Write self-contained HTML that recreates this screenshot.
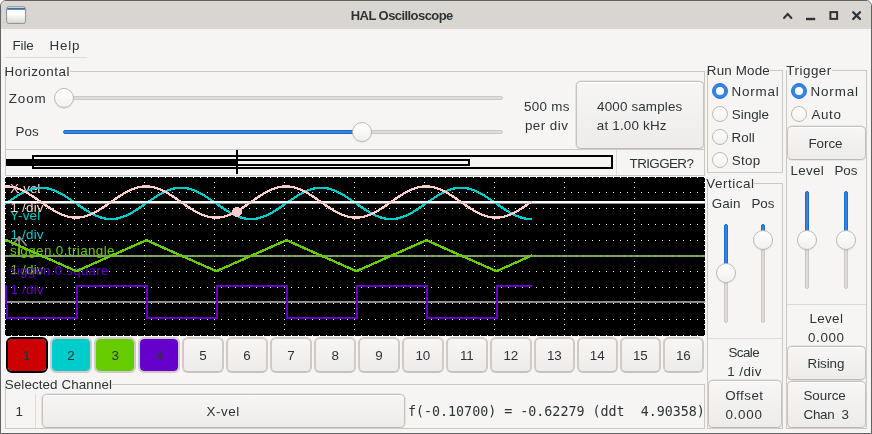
<!DOCTYPE html>
<html><head><meta charset="utf-8"><title>HAL Oscilloscope</title>
<style>
html,body{margin:0;padding:0;}
body{width:872px;height:434px;overflow:hidden;background:#fff;font-family:"Liberation Sans", sans-serif;font-size:13.4px;color:#2e3436;}
#win{position:absolute;left:0;top:0;width:872px;height:434px;box-sizing:border-box;background:#f6f5f4;border:1px solid #626262;border-radius:6px 6px 0 0;overflow:hidden;}
#root{position:absolute;left:-1px;top:-1px;width:872px;height:434px;will-change:transform;}
#title{position:absolute;left:0;top:0;width:872px;height:29px;background:#d9d6d2;}
.t{position:absolute;white-space:pre;line-height:20px;height:20px;}
.fr{position:absolute;box-sizing:border-box;border:1px solid #cdc7c2;}
.hl{position:absolute;height:1px;background:#cdc7c2;}
.sep{background:#dcdbda !important;}
.vl{position:absolute;width:1px;background:#cdc7c2;}
.mask{position:absolute;background:#f6f5f4;}
.btn{position:absolute;box-sizing:border-box;border:1px solid #c9c2bc;border-bottom-color:#bfb8b1;border-radius:5px;background:linear-gradient(#f7f6f5,#eeecea);box-shadow:0 0 0 0.6px #d8d3ce, inset 0 1px #fff;}
.cb{position:absolute;top:337px;height:36px;box-sizing:border-box;border:2px solid #cfcac5;border-radius:6px;background-clip:padding-box !important;}
.cb.btn{border:2px solid #cfcac5;border-bottom-color:#c8c2bc;box-shadow:none;border-radius:6px;}
.scope{position:absolute;}
.htrack{position:absolute;height:4px;box-sizing:border-box;border:1px solid #cdc7c2;background:#deddda;border-radius:2px;}
.hfill{position:absolute;height:4px;box-sizing:border-box;border:1px solid #1b6acb;background:#3584e4;border-radius:2px;}
.vtrack{position:absolute;width:4px;box-sizing:border-box;border:1px solid #cdc7c2;background:#deddda;border-radius:2px;}
.vfill{position:absolute;width:4px;box-sizing:border-box;border:1px solid #1b6acb;background:#3584e4;border-radius:2px;}
.knob{position:absolute;width:20px;height:20px;box-sizing:border-box;border:1px solid #bfb8b1;border-radius:50%;background:linear-gradient(#ffffff,#f1f0ee);box-shadow:0 1px 1px rgba(0,0,0,.08);}
.radio{position:absolute;width:16px;height:16px;box-sizing:border-box;border:1px solid #bfb8b1;border-radius:50%;background:linear-gradient(#ffffff,#f3f2f0);}
.radio.on{border:1px solid #2a76d8;background:#3584e4;}
.radio.on::after{content:"";position:absolute;left:3px;top:3px;width:8px;height:8px;border-radius:50%;background:#fff;}
.blk{position:absolute;background:#000;}
</style></head><body>
<div id="win"><div id="root">
<div id="title"></div>
<!-- window icon -->
<svg style="position:absolute;left:5px;top:5px" width="23" height="21" viewBox="0 0 23 21">
<defs><linearGradient id="ig" x1="0" y1="0" x2="0" y2="1"><stop offset="0" stop-color="#fff"/><stop offset="0.45" stop-color="#fdfdfd"/><stop offset="1" stop-color="#d6d8d4"/></linearGradient></defs>
<rect x="1.6" y="1.7" width="19" height="16.7" rx="2" fill="url(#ig)" stroke="#8f908c" stroke-width="1"/>
<rect x="2.2" y="2.8" width="17.8" height="2" fill="#416cab"/>
</svg>
<!-- window buttons -->
<svg style="position:absolute;left:778px;top:6px" width="90" height="18" viewBox="0 0 90 18" fill="none" stroke="#2e3436" stroke-width="2">
<path d="M6 12L9.7 8L13.4 12" stroke-linecap="round" stroke-linejoin="miter"/>
<path d="M28 13H37.2" stroke-width="2.4"/>
<rect x="52.4" y="6.1" width="6.7" height="6.8"/>
<path d="M75.2 6.2L82 13M82 6.2L75.2 13" stroke-width="2.3" stroke-linecap="round"/>
</svg>
<!-- menubar line -->
<div class="hl" style="left:5px;top:57px;width:82px;background:#dedbd8"></div>

<!-- Horizontal frame -->
<div class="fr" style="left:5px;top:71px;width:700px;height:105px"></div>
<div class="mask" style="left:6px;top:66px;width:64px;height:10px"></div>
<div class="hl" style="left:6px;top:149px;width:698px"></div>
<div class="vl sep" style="left:616px;top:150px;height:25px"></div>
<div class="htrack" style="left:55px;top:96px;width:448px"></div>
<div class="knob" style="left:54px;top:88px"></div>
<div class="htrack" style="left:63px;top:130px;width:440px"></div>
<div class="hfill" style="left:63px;top:130px;width:299px"></div>
<div class="knob" style="left:352px;top:122px"></div>
<div class="btn" style="left:576px;top:81px;width:128px;height:68px"></div>
<!-- thumbnail -->
<div class="blk" style="left:6px;top:159px;width:231px;height:7px"></div>
<div class="blk" style="left:32px;top:155px;width:581px;height:14px;background:none;box-sizing:border-box;border:2px solid #000"></div>
<div class="blk" style="left:236px;top:159px;width:234px;height:7px;background:none;box-sizing:border-box;border:2px solid #000;border-left:none"></div>
<div class="blk" style="left:236px;top:150px;width:2px;height:24px"></div>

<!-- scope -->
<svg class="scope" width="700" height="159" viewBox="0 0 700 159" style="left:5px;top:177px">
<rect width="700" height="159" fill="#000"/>
<g stroke="#fff" stroke-width="1" shape-rendering="crispEdges">
<line x1="-1" y1="0.5" x2="700" y2="0.5" stroke-dasharray="1 6"/>
<line x1="-1" y1="15.5" x2="700" y2="15.5" stroke-dasharray="1 6"/>
<line x1="-1" y1="31.5" x2="700" y2="31.5" stroke-dasharray="1 6"/>
<line x1="-1" y1="47.5" x2="700" y2="47.5" stroke-dasharray="1 6"/>
<line x1="-1" y1="63.5" x2="700" y2="63.5" stroke-dasharray="1 6"/>
<line x1="-1" y1="79.5" x2="700" y2="79.5" stroke-dasharray="1 6"/>
<line x1="-1" y1="94.5" x2="700" y2="94.5" stroke-dasharray="1 6"/>
<line x1="-1" y1="110.5" x2="700" y2="110.5" stroke-dasharray="1 6"/>
<line x1="-1" y1="126.5" x2="700" y2="126.5" stroke-dasharray="1 6"/>
<line x1="-1" y1="142.5" x2="700" y2="142.5" stroke-dasharray="1 6"/>
<line x1="-1" y1="158.5" x2="700" y2="158.5" stroke-dasharray="1 6"/>
<path d="M0 0v1M0 5v1M0 10v1M0 15v1M0 21v1M0 26v1M0 31v1M0 36v1M0 42v1M0 47v1M0 52v1M0 57v1M0 63v1M0 68v1M0 73v1M0 79v1M0 84v1M0 89v1M0 94v1M0 100v1M0 105v1M0 110v1M0 115v1M0 121v1M0 126v1M0 131v1M0 136v1M0 142v1M0 147v1M0 152v1M0 158v1M69 0v1M69 5v1M69 10v1M69 15v1M69 21v1M69 26v1M69 31v1M69 36v1M69 42v1M69 47v1M69 52v1M69 57v1M69 63v1M69 68v1M69 73v1M69 79v1M69 84v1M69 89v1M69 94v1M69 100v1M69 105v1M69 110v1M69 115v1M69 121v1M69 126v1M69 131v1M69 136v1M69 142v1M69 147v1M69 152v1M69 158v1M139 0v1M139 5v1M139 10v1M139 15v1M139 21v1M139 26v1M139 31v1M139 36v1M139 42v1M139 47v1M139 52v1M139 57v1M139 63v1M139 68v1M139 73v1M139 79v1M139 84v1M139 89v1M139 94v1M139 100v1M139 105v1M139 110v1M139 115v1M139 121v1M139 126v1M139 131v1M139 136v1M139 142v1M139 147v1M139 152v1M139 158v1M209 0v1M209 5v1M209 10v1M209 15v1M209 21v1M209 26v1M209 31v1M209 36v1M209 42v1M209 47v1M209 52v1M209 57v1M209 63v1M209 68v1M209 73v1M209 79v1M209 84v1M209 89v1M209 94v1M209 100v1M209 105v1M209 110v1M209 115v1M209 121v1M209 126v1M209 131v1M209 136v1M209 142v1M209 147v1M209 152v1M209 158v1M279 0v1M279 5v1M279 10v1M279 15v1M279 21v1M279 26v1M279 31v1M279 36v1M279 42v1M279 47v1M279 52v1M279 57v1M279 63v1M279 68v1M279 73v1M279 79v1M279 84v1M279 89v1M279 94v1M279 100v1M279 105v1M279 110v1M279 115v1M279 121v1M279 126v1M279 131v1M279 136v1M279 142v1M279 147v1M279 152v1M279 158v1M349 0v1M349 5v1M349 10v1M349 15v1M349 21v1M349 26v1M349 31v1M349 36v1M349 42v1M349 47v1M349 52v1M349 57v1M349 63v1M349 68v1M349 73v1M349 79v1M349 84v1M349 89v1M349 94v1M349 100v1M349 105v1M349 110v1M349 115v1M349 121v1M349 126v1M349 131v1M349 136v1M349 142v1M349 147v1M349 152v1M349 158v1M419 0v1M419 5v1M419 10v1M419 15v1M419 21v1M419 26v1M419 31v1M419 36v1M419 42v1M419 47v1M419 52v1M419 57v1M419 63v1M419 68v1M419 73v1M419 79v1M419 84v1M419 89v1M419 94v1M419 100v1M419 105v1M419 110v1M419 115v1M419 121v1M419 126v1M419 131v1M419 136v1M419 142v1M419 147v1M419 152v1M419 158v1M489 0v1M489 5v1M489 10v1M489 15v1M489 21v1M489 26v1M489 31v1M489 36v1M489 42v1M489 47v1M489 52v1M489 57v1M489 63v1M489 68v1M489 73v1M489 79v1M489 84v1M489 89v1M489 94v1M489 100v1M489 105v1M489 110v1M489 115v1M489 121v1M489 126v1M489 131v1M489 136v1M489 142v1M489 147v1M489 152v1M489 158v1M559 0v1M559 5v1M559 10v1M559 15v1M559 21v1M559 26v1M559 31v1M559 36v1M559 42v1M559 47v1M559 52v1M559 57v1M559 63v1M559 68v1M559 73v1M559 79v1M559 84v1M559 89v1M559 94v1M559 100v1M559 105v1M559 110v1M559 115v1M559 121v1M559 126v1M559 131v1M559 136v1M559 142v1M559 147v1M559 152v1M559 158v1M629 0v1M629 5v1M629 10v1M629 15v1M629 21v1M629 26v1M629 31v1M629 36v1M629 42v1M629 47v1M629 52v1M629 57v1M629 63v1M629 68v1M629 73v1M629 79v1M629 84v1M629 89v1M629 94v1M629 100v1M629 105v1M629 110v1M629 115v1M629 121v1M629 126v1M629 131v1M629 136v1M629 142v1M629 147v1M629 152v1M629 158v1M699 0v1M699 5v1M699 10v1M699 15v1M699 21v1M699 26v1M699 31v1M699 36v1M699 42v1M699 47v1M699 52v1M699 57v1M699 63v1M699 68v1M699 73v1M699 79v1M699 84v1M699 89v1M699 94v1M699 100v1M699 105v1M699 110v1M699 115v1M699 121v1M699 126v1M699 131v1M699 136v1M699 142v1M699 147v1M699 152v1M699 158v1" transform="translate(0.5 0)"/>
</g>
<g fill="none" stroke-width="2.3" stroke-linejoin="round" shape-rendering="crispEdges">
<rect x="0" y="25" width="700" height="2" fill="#8c8c8c" stroke="none"/>
<rect x="0" y="78" width="700" height="2" fill="#8c8c8c" stroke="none"/>
<rect x="0" y="124" width="700" height="2" fill="#8c8c8c" stroke="none"/>
<line x1="1" y1="79" x2="700" y2="79" stroke="#66cc00" stroke-width="2" stroke-dasharray="2 4"/>
<path d="M14.2 79V60.2M6.9 68.8L14.2 59.8L21.5 68.8" stroke="#8e8e8e" stroke-width="1.8" shape-rendering="auto"/>
<g font-family='"Liberation Sans", sans-serif' font-size="13.4" stroke="none" shape-rendering="auto" style="white-space:pre">
<text x="5.00" y="42.7" fill="#00cccc" letter-spacing="0.250">Y-vel</text>
<text x="5.60" y="61.7" fill="#00cccc" letter-spacing="0.180">1 /div</text>
<text x="4.90" y="78.1" fill="#66cc00" letter-spacing="0.397">siggen.0.triangle</text>
<text x="5.60" y="96.7" fill="#66cc00" letter-spacing="0.180">1 /div</text>
<text x="4.90" y="98.0" fill="#6600cc" letter-spacing="0.232">siggen.0.square</text>
<text x="5.60" y="117.0" fill="#6600cc" letter-spacing="0.180">1 /div</text>
<text x="5.00" y="15.7" fill="#ffcccc" letter-spacing="-0.062">X-vel</text>
<text x="5.60" y="34.7" fill="#ffcccc" letter-spacing="0.180">1 /div</text>
</g>
<polyline points="0.8,108.00 2.0,141.00 72.0,141.00 72.0,109.00 142.0,109.00 142.0,141.00 212.0,141.00 212.0,109.00 282.0,109.00 282.0,141.00 352.0,141.00 352.0,109.00 422.0,109.00 422.0,141.00 492.0,141.00 492.0,109.00 527.0,109.00" stroke="#6600cc" stroke-width="2" stroke-linejoin="miter"/>
<polyline points="0.0,63.82 1.4,63.20 71.4,94.20 141.4,63.20 211.4,94.20 281.4,63.20 351.4,94.20 421.4,63.20 491.4,94.20 527.0,78.43" stroke="#66cc00" stroke-width="2.4"/>
<polyline points="0.0,27.10 1.0,26.40 2.0,25.70 3.0,25.00 4.0,24.31 5.0,23.61 6.0,22.93 7.0,22.25 8.0,21.58 9.0,20.92 10.0,20.27 11.0,19.63 12.0,19.01 13.0,18.40 14.0,17.81 15.0,17.23 16.0,16.67 17.0,16.14 18.0,15.62 19.0,15.12 20.0,14.65 21.0,14.20 22.0,13.78 23.0,13.38 24.0,13.01 25.0,12.66 26.0,12.34 27.0,12.06 28.0,11.79 29.0,11.56 30.0,11.36 31.0,11.19 32.0,11.05 33.0,10.94 34.0,10.86 35.0,10.82 36.0,10.80 37.0,10.82 38.0,10.86 39.0,10.94 40.0,11.05 41.0,11.19 42.0,11.36 43.0,11.56 44.0,11.79 45.0,12.06 46.0,12.34 47.0,12.66 48.0,13.01 49.0,13.38 50.0,13.78 51.0,14.20 52.0,14.65 53.0,15.12 54.0,15.62 55.0,16.14 56.0,16.67 57.0,17.23 58.0,17.81 59.0,18.40 60.0,19.01 61.0,19.63 62.0,20.27 63.0,20.92 64.0,21.58 65.0,22.25 66.0,22.93 67.0,23.61 68.0,24.31 69.0,25.00 70.0,25.70 71.0,26.40 72.0,27.10 73.0,27.80 74.0,28.49 75.0,29.19 76.0,29.87 77.0,30.55 78.0,31.22 79.0,31.88 80.0,32.53 81.0,33.17 82.0,33.79 83.0,34.40 84.0,34.99 85.0,35.57 86.0,36.13 87.0,36.66 88.0,37.18 89.0,37.68 90.0,38.15 91.0,38.60 92.0,39.02 93.0,39.42 94.0,39.79 95.0,40.14 96.0,40.46 97.0,40.74 98.0,41.01 99.0,41.24 100.0,41.44 101.0,41.61 102.0,41.75 103.0,41.86 104.0,41.94 105.0,41.98 106.0,42.00 107.0,41.98 108.0,41.94 109.0,41.86 110.0,41.75 111.0,41.61 112.0,41.44 113.0,41.24 114.0,41.01 115.0,40.74 116.0,40.46 117.0,40.14 118.0,39.79 119.0,39.42 120.0,39.02 121.0,38.60 122.0,38.15 123.0,37.68 124.0,37.18 125.0,36.66 126.0,36.13 127.0,35.57 128.0,34.99 129.0,34.40 130.0,33.79 131.0,33.17 132.0,32.53 133.0,31.88 134.0,31.22 135.0,30.55 136.0,29.87 137.0,29.19 138.0,28.49 139.0,27.80 140.0,27.10 141.0,26.40 142.0,25.70 143.0,25.00 144.0,24.31 145.0,23.61 146.0,22.93 147.0,22.25 148.0,21.58 149.0,20.92 150.0,20.27 151.0,19.63 152.0,19.01 153.0,18.40 154.0,17.81 155.0,17.23 156.0,16.67 157.0,16.14 158.0,15.62 159.0,15.12 160.0,14.65 161.0,14.20 162.0,13.78 163.0,13.38 164.0,13.01 165.0,12.66 166.0,12.34 167.0,12.06 168.0,11.79 169.0,11.56 170.0,11.36 171.0,11.19 172.0,11.05 173.0,10.94 174.0,10.86 175.0,10.82 176.0,10.80 177.0,10.82 178.0,10.86 179.0,10.94 180.0,11.05 181.0,11.19 182.0,11.36 183.0,11.56 184.0,11.79 185.0,12.06 186.0,12.34 187.0,12.66 188.0,13.01 189.0,13.38 190.0,13.78 191.0,14.20 192.0,14.65 193.0,15.12 194.0,15.62 195.0,16.14 196.0,16.67 197.0,17.23 198.0,17.81 199.0,18.40 200.0,19.01 201.0,19.63 202.0,20.27 203.0,20.92 204.0,21.58 205.0,22.25 206.0,22.93 207.0,23.61 208.0,24.31 209.0,25.00 210.0,25.70 211.0,26.40 212.0,27.10 213.0,27.80 214.0,28.49 215.0,29.19 216.0,29.87 217.0,30.55 218.0,31.22 219.0,31.88 220.0,32.53 221.0,33.17 222.0,33.79 223.0,34.40 224.0,34.99 225.0,35.57 226.0,36.13 227.0,36.66 228.0,37.18 229.0,37.68 230.0,38.15 231.0,38.60 232.0,39.02 233.0,39.42 234.0,39.79 235.0,40.14 236.0,40.46 237.0,40.74 238.0,41.01 239.0,41.24 240.0,41.44 241.0,41.61 242.0,41.75 243.0,41.86 244.0,41.94 245.0,41.98 246.0,42.00 247.0,41.98 248.0,41.94 249.0,41.86 250.0,41.75 251.0,41.61 252.0,41.44 253.0,41.24 254.0,41.01 255.0,40.74 256.0,40.46 257.0,40.14 258.0,39.79 259.0,39.42 260.0,39.02 261.0,38.60 262.0,38.15 263.0,37.68 264.0,37.18 265.0,36.66 266.0,36.13 267.0,35.57 268.0,34.99 269.0,34.40 270.0,33.79 271.0,33.17 272.0,32.53 273.0,31.88 274.0,31.22 275.0,30.55 276.0,29.87 277.0,29.19 278.0,28.49 279.0,27.80 280.0,27.10 281.0,26.40 282.0,25.70 283.0,25.00 284.0,24.31 285.0,23.61 286.0,22.93 287.0,22.25 288.0,21.58 289.0,20.92 290.0,20.27 291.0,19.63 292.0,19.01 293.0,18.40 294.0,17.81 295.0,17.23 296.0,16.67 297.0,16.14 298.0,15.62 299.0,15.12 300.0,14.65 301.0,14.20 302.0,13.78 303.0,13.38 304.0,13.01 305.0,12.66 306.0,12.34 307.0,12.06 308.0,11.79 309.0,11.56 310.0,11.36 311.0,11.19 312.0,11.05 313.0,10.94 314.0,10.86 315.0,10.82 316.0,10.80 317.0,10.82 318.0,10.86 319.0,10.94 320.0,11.05 321.0,11.19 322.0,11.36 323.0,11.56 324.0,11.79 325.0,12.06 326.0,12.34 327.0,12.66 328.0,13.01 329.0,13.38 330.0,13.78 331.0,14.20 332.0,14.65 333.0,15.12 334.0,15.62 335.0,16.14 336.0,16.67 337.0,17.23 338.0,17.81 339.0,18.40 340.0,19.01 341.0,19.63 342.0,20.27 343.0,20.92 344.0,21.58 345.0,22.25 346.0,22.93 347.0,23.61 348.0,24.31 349.0,25.00 350.0,25.70 351.0,26.40 352.0,27.10 353.0,27.80 354.0,28.49 355.0,29.19 356.0,29.87 357.0,30.55 358.0,31.22 359.0,31.88 360.0,32.53 361.0,33.17 362.0,33.79 363.0,34.40 364.0,34.99 365.0,35.57 366.0,36.13 367.0,36.66 368.0,37.18 369.0,37.68 370.0,38.15 371.0,38.60 372.0,39.02 373.0,39.42 374.0,39.79 375.0,40.14 376.0,40.46 377.0,40.74 378.0,41.01 379.0,41.24 380.0,41.44 381.0,41.61 382.0,41.75 383.0,41.86 384.0,41.94 385.0,41.98 386.0,42.00 387.0,41.98 388.0,41.94 389.0,41.86 390.0,41.75 391.0,41.61 392.0,41.44 393.0,41.24 394.0,41.01 395.0,40.74 396.0,40.46 397.0,40.14 398.0,39.79 399.0,39.42 400.0,39.02 401.0,38.60 402.0,38.15 403.0,37.68 404.0,37.18 405.0,36.66 406.0,36.13 407.0,35.57 408.0,34.99 409.0,34.40 410.0,33.79 411.0,33.17 412.0,32.53 413.0,31.88 414.0,31.22 415.0,30.55 416.0,29.87 417.0,29.19 418.0,28.49 419.0,27.80 420.0,27.10 421.0,26.40 422.0,25.70 423.0,25.00 424.0,24.31 425.0,23.61 426.0,22.93 427.0,22.25 428.0,21.58 429.0,20.92 430.0,20.27 431.0,19.63 432.0,19.01 433.0,18.40 434.0,17.81 435.0,17.23 436.0,16.67 437.0,16.14 438.0,15.62 439.0,15.12 440.0,14.65 441.0,14.20 442.0,13.78 443.0,13.38 444.0,13.01 445.0,12.66 446.0,12.34 447.0,12.06 448.0,11.79 449.0,11.56 450.0,11.36 451.0,11.19 452.0,11.05 453.0,10.94 454.0,10.86 455.0,10.82 456.0,10.80 457.0,10.82 458.0,10.86 459.0,10.94 460.0,11.05 461.0,11.19 462.0,11.36 463.0,11.56 464.0,11.79 465.0,12.06 466.0,12.34 467.0,12.66 468.0,13.01 469.0,13.38 470.0,13.78 471.0,14.20 472.0,14.65 473.0,15.12 474.0,15.62 475.0,16.14 476.0,16.67 477.0,17.23 478.0,17.81 479.0,18.40 480.0,19.01 481.0,19.63 482.0,20.27 483.0,20.92 484.0,21.58 485.0,22.25 486.0,22.93 487.0,23.61 488.0,24.31 489.0,25.00 490.0,25.70 491.0,26.40 492.0,27.10 493.0,27.80 494.0,28.49 495.0,29.19 496.0,29.87 497.0,30.55 498.0,31.22 499.0,31.88 500.0,32.53 501.0,33.17 502.0,33.79 503.0,34.40 504.0,34.99 505.0,35.57 506.0,36.13 507.0,36.66 508.0,37.18 509.0,37.68 510.0,38.15 511.0,38.60 512.0,39.02 513.0,39.42 514.0,39.79 515.0,40.14 516.0,40.46 517.0,40.74 518.0,41.01 519.0,41.24 520.0,41.44 521.0,41.61 522.0,41.75 523.0,41.86 524.0,41.94 525.0,41.98 526.0,42.00 527.0,41.98" stroke="#00cccc"/>
<rect x="0" y="24" width="700" height="2" fill="#ffffff" stroke="none"/>
<polyline points="0.0,9.42 1.0,9.40 2.0,9.42 3.0,9.46 4.0,9.54 5.0,9.65 6.0,9.79 7.0,9.96 8.0,10.16 9.0,10.39 10.0,10.66 11.0,10.94 12.0,11.26 13.0,11.61 14.0,11.98 15.0,12.38 16.0,12.80 17.0,13.25 18.0,13.72 19.0,14.22 20.0,14.74 21.0,15.27 22.0,15.83 23.0,16.41 24.0,17.00 25.0,17.61 26.0,18.23 27.0,18.87 28.0,19.52 29.0,20.18 30.0,20.85 31.0,21.53 32.0,22.21 33.0,22.91 34.0,23.60 35.0,24.30 36.0,25.00 37.0,25.70 38.0,26.40 39.0,27.09 40.0,27.79 41.0,28.47 42.0,29.15 43.0,29.82 44.0,30.48 45.0,31.13 46.0,31.77 47.0,32.39 48.0,33.00 49.0,33.59 50.0,34.17 51.0,34.73 52.0,35.26 53.0,35.78 54.0,36.28 55.0,36.75 56.0,37.20 57.0,37.62 58.0,38.02 59.0,38.39 60.0,38.74 61.0,39.06 62.0,39.34 63.0,39.61 64.0,39.84 65.0,40.04 66.0,40.21 67.0,40.35 68.0,40.46 69.0,40.54 70.0,40.58 71.0,40.60 72.0,40.58 73.0,40.54 74.0,40.46 75.0,40.35 76.0,40.21 77.0,40.04 78.0,39.84 79.0,39.61 80.0,39.34 81.0,39.06 82.0,38.74 83.0,38.39 84.0,38.02 85.0,37.62 86.0,37.20 87.0,36.75 88.0,36.28 89.0,35.78 90.0,35.26 91.0,34.73 92.0,34.17 93.0,33.59 94.0,33.00 95.0,32.39 96.0,31.77 97.0,31.13 98.0,30.48 99.0,29.82 100.0,29.15 101.0,28.47 102.0,27.79 103.0,27.09 104.0,26.40 105.0,25.70 106.0,25.00 107.0,24.30 108.0,23.60 109.0,22.91 110.0,22.21 111.0,21.53 112.0,20.85 113.0,20.18 114.0,19.52 115.0,18.87 116.0,18.23 117.0,17.61 118.0,17.00 119.0,16.41 120.0,15.83 121.0,15.27 122.0,14.74 123.0,14.22 124.0,13.72 125.0,13.25 126.0,12.80 127.0,12.38 128.0,11.98 129.0,11.61 130.0,11.26 131.0,10.94 132.0,10.66 133.0,10.39 134.0,10.16 135.0,9.96 136.0,9.79 137.0,9.65 138.0,9.54 139.0,9.46 140.0,9.42 141.0,9.40 142.0,9.42 143.0,9.46 144.0,9.54 145.0,9.65 146.0,9.79 147.0,9.96 148.0,10.16 149.0,10.39 150.0,10.66 151.0,10.94 152.0,11.26 153.0,11.61 154.0,11.98 155.0,12.38 156.0,12.80 157.0,13.25 158.0,13.72 159.0,14.22 160.0,14.74 161.0,15.27 162.0,15.83 163.0,16.41 164.0,17.00 165.0,17.61 166.0,18.23 167.0,18.87 168.0,19.52 169.0,20.18 170.0,20.85 171.0,21.53 172.0,22.21 173.0,22.91 174.0,23.60 175.0,24.30 176.0,25.00 177.0,25.70 178.0,26.40 179.0,27.09 180.0,27.79 181.0,28.47 182.0,29.15 183.0,29.82 184.0,30.48 185.0,31.13 186.0,31.77 187.0,32.39 188.0,33.00 189.0,33.59 190.0,34.17 191.0,34.73 192.0,35.26 193.0,35.78 194.0,36.28 195.0,36.75 196.0,37.20 197.0,37.62 198.0,38.02 199.0,38.39 200.0,38.74 201.0,39.06 202.0,39.34 203.0,39.61 204.0,39.84 205.0,40.04 206.0,40.21 207.0,40.35 208.0,40.46 209.0,40.54 210.0,40.58 211.0,40.60 212.0,40.58 213.0,40.54 214.0,40.46 215.0,40.35 216.0,40.21 217.0,40.04 218.0,39.84 219.0,39.61 220.0,39.34 221.0,39.06 222.0,38.74 223.0,38.39 224.0,38.02 225.0,37.62 226.0,37.20 227.0,36.75 228.0,36.28 229.0,35.78 230.0,35.26 231.0,34.73 232.0,34.17 233.0,33.59 234.0,33.00 235.0,32.39 236.0,31.77 237.0,31.13 238.0,30.48 239.0,29.82 240.0,29.15 241.0,28.47 242.0,27.79 243.0,27.09 244.0,26.40 245.0,25.70 246.0,25.00 247.0,24.30 248.0,23.60 249.0,22.91 250.0,22.21 251.0,21.53 252.0,20.85 253.0,20.18 254.0,19.52 255.0,18.87 256.0,18.23 257.0,17.61 258.0,17.00 259.0,16.41 260.0,15.83 261.0,15.27 262.0,14.74 263.0,14.22 264.0,13.72 265.0,13.25 266.0,12.80 267.0,12.38 268.0,11.98 269.0,11.61 270.0,11.26 271.0,10.94 272.0,10.66 273.0,10.39 274.0,10.16 275.0,9.96 276.0,9.79 277.0,9.65 278.0,9.54 279.0,9.46 280.0,9.42 281.0,9.40 282.0,9.42 283.0,9.46 284.0,9.54 285.0,9.65 286.0,9.79 287.0,9.96 288.0,10.16 289.0,10.39 290.0,10.66 291.0,10.94 292.0,11.26 293.0,11.61 294.0,11.98 295.0,12.38 296.0,12.80 297.0,13.25 298.0,13.72 299.0,14.22 300.0,14.74 301.0,15.27 302.0,15.83 303.0,16.41 304.0,17.00 305.0,17.61 306.0,18.23 307.0,18.87 308.0,19.52 309.0,20.18 310.0,20.85 311.0,21.53 312.0,22.21 313.0,22.91 314.0,23.60 315.0,24.30 316.0,25.00 317.0,25.70 318.0,26.40 319.0,27.09 320.0,27.79 321.0,28.47 322.0,29.15 323.0,29.82 324.0,30.48 325.0,31.13 326.0,31.77 327.0,32.39 328.0,33.00 329.0,33.59 330.0,34.17 331.0,34.73 332.0,35.26 333.0,35.78 334.0,36.28 335.0,36.75 336.0,37.20 337.0,37.62 338.0,38.02 339.0,38.39 340.0,38.74 341.0,39.06 342.0,39.34 343.0,39.61 344.0,39.84 345.0,40.04 346.0,40.21 347.0,40.35 348.0,40.46 349.0,40.54 350.0,40.58 351.0,40.60 352.0,40.58 353.0,40.54 354.0,40.46 355.0,40.35 356.0,40.21 357.0,40.04 358.0,39.84 359.0,39.61 360.0,39.34 361.0,39.06 362.0,38.74 363.0,38.39 364.0,38.02 365.0,37.62 366.0,37.20 367.0,36.75 368.0,36.28 369.0,35.78 370.0,35.26 371.0,34.73 372.0,34.17 373.0,33.59 374.0,33.00 375.0,32.39 376.0,31.77 377.0,31.13 378.0,30.48 379.0,29.82 380.0,29.15 381.0,28.47 382.0,27.79 383.0,27.09 384.0,26.40 385.0,25.70 386.0,25.00 387.0,24.30 388.0,23.60 389.0,22.91 390.0,22.21 391.0,21.53 392.0,20.85 393.0,20.18 394.0,19.52 395.0,18.87 396.0,18.23 397.0,17.61 398.0,17.00 399.0,16.41 400.0,15.83 401.0,15.27 402.0,14.74 403.0,14.22 404.0,13.72 405.0,13.25 406.0,12.80 407.0,12.38 408.0,11.98 409.0,11.61 410.0,11.26 411.0,10.94 412.0,10.66 413.0,10.39 414.0,10.16 415.0,9.96 416.0,9.79 417.0,9.65 418.0,9.54 419.0,9.46 420.0,9.42 421.0,9.40 422.0,9.42 423.0,9.46 424.0,9.54 425.0,9.65 426.0,9.79 427.0,9.96 428.0,10.16 429.0,10.39 430.0,10.66 431.0,10.94 432.0,11.26 433.0,11.61 434.0,11.98 435.0,12.38 436.0,12.80 437.0,13.25 438.0,13.72 439.0,14.22 440.0,14.74 441.0,15.27 442.0,15.83 443.0,16.41 444.0,17.00 445.0,17.61 446.0,18.23 447.0,18.87 448.0,19.52 449.0,20.18 450.0,20.85 451.0,21.53 452.0,22.21 453.0,22.91 454.0,23.60 455.0,24.30 456.0,25.00 457.0,25.70 458.0,26.40 459.0,27.09 460.0,27.79 461.0,28.47 462.0,29.15 463.0,29.82 464.0,30.48 465.0,31.13 466.0,31.77 467.0,32.39 468.0,33.00 469.0,33.59 470.0,34.17 471.0,34.73 472.0,35.26 473.0,35.78 474.0,36.28 475.0,36.75 476.0,37.20 477.0,37.62 478.0,38.02 479.0,38.39 480.0,38.74 481.0,39.06 482.0,39.34 483.0,39.61 484.0,39.84 485.0,40.04 486.0,40.21 487.0,40.35 488.0,40.46 489.0,40.54 490.0,40.58 491.0,40.60 492.0,40.58 493.0,40.54 494.0,40.46 495.0,40.35 496.0,40.21 497.0,40.04 498.0,39.84 499.0,39.61 500.0,39.34 501.0,39.06 502.0,38.74 503.0,38.39 504.0,38.02 505.0,37.62 506.0,37.20 507.0,36.75 508.0,36.28 509.0,35.78 510.0,35.26 511.0,34.73 512.0,34.17 513.0,33.59 514.0,33.00 515.0,32.39 516.0,31.77 517.0,31.13 518.0,30.48 519.0,29.82 520.0,29.15 521.0,28.47 522.0,27.79 523.0,27.09 524.0,26.40 525.0,25.70 526.0,25.00 527.0,24.30" stroke="#ffcccc"/>
<circle cx="232" cy="34.8" r="5" fill="#ffcccc" stroke="none"/>
</g>
</svg>


<!-- channel buttons -->
<div class="cb" style="left:6px;width:42px;background:#cc0000;border:2px solid #000;"></div>
<div class="cb" style="left:50px;width:42px;background:#00cccc;"></div>
<div class="cb" style="left:94px;width:42px;background:#66cc00;"></div>
<div class="cb" style="left:138px;width:42px;background:#6600cc;"></div>
<div class="cb btn" style="left:182px;width:42px;"></div>
<div class="cb btn" style="left:226px;width:42px;"></div>
<div class="cb btn" style="left:270px;width:42px;"></div>
<div class="cb btn" style="left:314px;width:42px;"></div>
<div class="cb btn" style="left:358px;width:42px;"></div>
<div class="cb btn" style="left:402px;width:42px;"></div>
<div class="cb btn" style="left:446px;width:42px;"></div>
<div class="cb btn" style="left:490px;width:42px;"></div>
<div class="cb btn" style="left:534px;width:41px;"></div>
<div class="cb btn" style="left:577px;width:41px;"></div>
<div class="cb btn" style="left:620px;width:41px;"></div>
<div class="cb btn" style="left:663px;width:41px;"></div>

<!-- Selected Channel frame -->
<div class="fr" style="left:5px;top:384px;width:700px;height:45px"></div>
<div class="mask" style="left:6px;top:380px;width:106px;height:10px"></div>
<div class="vl sep" style="left:35px;top:394px;height:34px"></div>
<div class="btn" style="left:42px;top:394px;width:363px;height:34px"></div>

<!-- Run Mode frame -->
<div class="fr" style="left:707px;top:70px;width:76px;height:103px"></div>
<div class="mask" style="left:708px;top:66px;width:62px;height:10px"></div>
<div class="radio on" style="left:712px;top:83px"></div><div class="radio" style="left:712px;top:106px"></div><div class="radio" style="left:712px;top:129px"></div><div class="radio" style="left:712px;top:152px"></div>

<!-- Trigger frame -->
<div class="fr" style="left:786px;top:70px;width:81px;height:359px"></div>
<div class="mask" style="left:787px;top:66px;width:45px;height:10px"></div>
<div class="radio on" style="left:791px;top:83px"></div><div class="radio" style="left:791px;top:106px"></div>
<div class="btn" style="left:787px;top:126px;width:79px;height:34px"></div>
<div class="vtrack" style="left:805px;top:191px;height:98px"></div><div class="vfill" style="left:805px;top:191px;height:49px"></div><div class="knob" style="left:797px;top:230px"></div>
<div class="vtrack" style="left:844px;top:191px;height:98px"></div><div class="vfill" style="left:844px;top:191px;height:49px"></div><div class="knob" style="left:836px;top:230px"></div>
<div class="hl sep" style="left:787px;top:304px;width:79px"></div>
<div class="btn" style="left:787px;top:346px;width:79px;height:34px"></div>
<div class="btn" style="left:787px;top:381px;width:79px;height:47px"></div>

<!-- Vertical frame -->
<div class="fr" style="left:707px;top:183px;width:76px;height:246px"></div>
<div class="mask" style="left:708px;top:179px;width:46px;height:10px"></div>
<div class="vtrack" style="left:724px;top:224px;height:99px"></div><div class="vfill" style="left:724px;top:224px;height:49px"></div><div class="knob" style="left:716px;top:263px"></div>
<div class="vtrack" style="left:761px;top:224px;height:99px"></div><div class="vfill" style="left:761px;top:224px;height:16px"></div><div class="knob" style="left:753px;top:230px"></div>
<div class="hl sep" style="left:708px;top:338px;width:74px"></div>
<div class="btn" style="left:708px;top:380px;width:74px;height:48px"></div>

<span class="t" style="left:350.75px;top:5.50px;color:#2e3436;font-size:13px;font-weight:bold;letter-spacing:-0.563px;">HAL Oscilloscope</span>
<span class="t" style="left:12.50px;top:35.50px;color:#2e3436;letter-spacing:-0.100px;">File</span>
<span class="t" style="left:49.50px;top:35.50px;color:#2e3436;letter-spacing:0.767px;">Help</span>
<span class="t" style="left:4.50px;top:61.50px;color:#2e3436;letter-spacing:0.522px;">Horizontal</span>
<span class="t" style="left:8.70px;top:88.50px;color:#2e3436;letter-spacing:0.950px;">Zoom</span>
<span class="t" style="left:15.60px;top:121.50px;color:#2e3436;letter-spacing:0.050px;">Pos</span>
<span class="t" style="left:523.90px;top:96.50px;color:#2e3436;letter-spacing:0.320px;">500 ms</span>
<span class="t" style="left:524.95px;top:115.50px;color:#2e3436;letter-spacing:0.458px;">per div</span>
<span class="t" style="left:597.05px;top:96.50px;color:#2e3436;letter-spacing:0.168px;">4000 samples</span>
<span class="t" style="left:596.80px;top:115.50px;color:#2e3436;letter-spacing:0.200px;">at 1.00 kHz</span>
<span class="t" style="left:629.58px;top:153.50px;color:#2e3436;letter-spacing:-0.600px;">TRIGGER?</span>
<span class="t" style="left:706.80px;top:60.50px;color:#2e3436;letter-spacing:0.164px;">Run Mode</span>
<span class="t" style="left:731.60px;top:81.50px;color:#2e3436;letter-spacing:0.790px;">Normal</span>
<span class="t" style="left:731.85px;top:104.50px;color:#2e3436;letter-spacing:-0.010px;">Single</span>
<span class="t" style="left:731.60px;top:127.50px;color:#2e3436;letter-spacing:0.017px;">Roll</span>
<span class="t" style="left:731.85px;top:150.50px;color:#2e3436;letter-spacing:0.283px;">Stop</span>
<span class="t" style="left:786.25px;top:60.50px;color:#2e3436;letter-spacing:0.517px;">Trigger</span>
<span class="t" style="left:810.50px;top:81.50px;color:#2e3436;letter-spacing:0.850px;">Normal</span>
<span class="t" style="left:811.50px;top:104.50px;color:#2e3436;letter-spacing:0.600px;">Auto</span>
<span class="t" style="left:808.50px;top:133.50px;color:#2e3436;letter-spacing:-0.062px;">Force</span>
<span class="t" style="left:790.60px;top:160.50px;color:#2e3436;letter-spacing:0.287px;">Level</span>
<span class="t" style="left:834.40px;top:160.50px;color:#2e3436;letter-spacing:0.050px;">Pos</span>
<span class="t" style="left:706.35px;top:173.50px;color:#2e3436;letter-spacing:0.521px;">Vertical</span>
<span class="t" style="left:711.85px;top:193.50px;color:#2e3436;letter-spacing:0.083px;">Gain</span>
<span class="t" style="left:751.40px;top:193.50px;color:#2e3436;letter-spacing:0.050px;">Pos</span>
<span class="t" style="left:728.45px;top:342.50px;color:#2e3436;letter-spacing:-0.588px;">Scale</span>
<span class="t" style="left:727.20px;top:361.50px;color:#2e3436;letter-spacing:0.440px;">1 /div</span>
<span class="t" style="left:725.15px;top:385.50px;color:#2e3436;letter-spacing:0.490px;">Offset</span>
<span class="t" style="left:725.40px;top:404.50px;color:#2e3436;letter-spacing:0.750px;">0.000</span>
<span class="t" style="left:809.60px;top:308.50px;color:#2e3436;letter-spacing:0.312px;">Level</span>
<span class="t" style="left:808.10px;top:327.50px;color:#2e3436;letter-spacing:0.575px;">0.000</span>
<span class="t" style="left:807.60px;top:353.50px;color:#2e3436;letter-spacing:-0.090px;">Rising</span>
<span class="t" style="left:803.45px;top:385.50px;color:#2e3436;letter-spacing:-0.020px;">Source</span>
<span class="t" style="left:803.45px;top:404.50px;color:#2e3436;letter-spacing:-0.217px;">Chan  3</span>
<span class="t" style="left:4.75px;top:374.50px;color:#2e3436;letter-spacing:0.100px;">Selected Channel</span>
<span class="t" style="left:15.38px;top:401.50px;color:#2e3436;letter-spacing:-0.250px;">1</span>
<span class="t" style="left:206.50px;top:401.50px;color:#2e3436;letter-spacing:0.562px;">X-vel</span>
<span class="t" style="left:407.95px;top:401.50px;color:#2e3436;font-size:13.33px;font-family:'DejaVu Sans Mono', 'Liberation Mono', monospace;">f(-0.10700) = -0.62279 (ddt  4.90358)</span>
<span class="t" style="left:23.12px;top:345.50px;color:#2e3436;font-weight:bold;">1</span>
<span class="t" style="left:67.25px;top:345.50px;color:#2e3436;">2</span>
<span class="t" style="left:111.38px;top:345.50px;color:#2e3436;">3</span>
<span class="t" style="left:155.38px;top:345.50px;color:#2e3436;">4</span>
<span class="t" style="left:199.25px;top:345.50px;color:#2e3436;">5</span>
<span class="t" style="left:243.25px;top:345.50px;color:#2e3436;">6</span>
<span class="t" style="left:287.25px;top:345.50px;color:#2e3436;">7</span>
<span class="t" style="left:331.38px;top:345.50px;color:#2e3436;">8</span>
<span class="t" style="left:375.25px;top:345.50px;color:#2e3436;">9</span>
<span class="t" style="left:415.38px;top:345.50px;color:#2e3436;">10</span>
<span class="t" style="left:459.88px;top:345.50px;color:#2e3436;">11</span>
<span class="t" style="left:503.38px;top:345.50px;color:#2e3436;">12</span>
<span class="t" style="left:546.88px;top:345.50px;color:#2e3436;">13</span>
<span class="t" style="left:589.75px;top:345.50px;color:#2e3436;">14</span>
<span class="t" style="left:632.88px;top:345.50px;color:#2e3436;">15</span>
<span class="t" style="left:675.88px;top:345.50px;color:#2e3436;">16</span>
</div></div>
</body></html>
